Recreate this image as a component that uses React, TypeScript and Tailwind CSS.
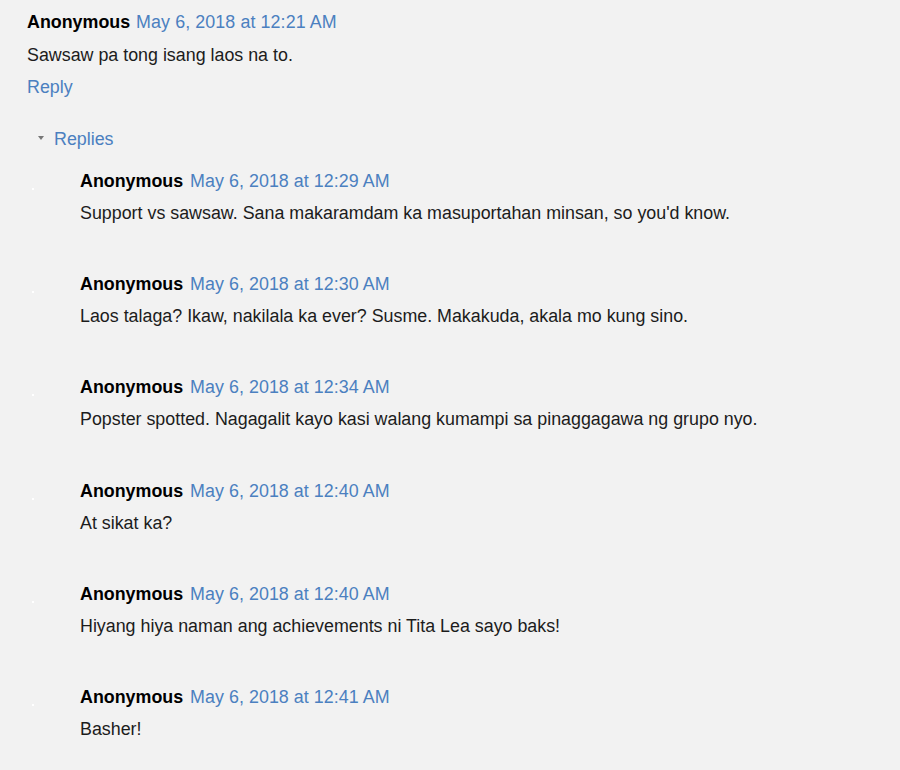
import React from "react";

const replies = [
  { time: "May 6, 2018 at 12:29 AM", text: "Support vs sawsaw. Sana makaramdam ka masuportahan minsan, so you'd know." },
  { time: "May 6, 2018 at 12:30 AM", text: "Laos talaga? Ikaw, nakilala ka ever? Susme. Makakuda, akala mo kung sino." },
  { time: "May 6, 2018 at 12:34 AM", text: "Popster spotted. Nagagalit kayo kasi walang kumampi sa pinaggagawa ng grupo nyo." },
  { time: "May 6, 2018 at 12:40 AM", text: "At sikat ka?" },
  { time: "May 6, 2018 at 12:40 AM", text: "Hiyang hiya naman ang achievements ni Tita Lea sayo baks!" },
  { time: "May 6, 2018 at 12:41 AM", text: "Basher!" },
];

export default function App() {
  return (
    <div
      className="min-h-[770px] bg-[#f2f2f2] pl-[27px] pt-[6px] text-[17.85px] text-[#1c1c1c]"
      style={{ fontFamily: '"Liberation Sans", Arial, sans-serif' }}
    >
      <div className="leading-[33px]">
        <span className="font-bold text-black">Anonymous</span>{" "}
        <span className="ml-[1px] tracking-[0.1px] text-[#4b80c0]">May 6, 2018 at 12:21 AM</span>
      </div>
      <div className="leading-[33px]">Sawsaw pa tong isang laos na to.</div>
      <div className="-mt-[1px] leading-[33px] text-[#4b80c0]">Reply</div>

      <div className="mt-[19px] flex items-center leading-[33px]">
        <span className="ml-[11px] mr-[10px] mb-[3px] h-0 w-0 border-x-[3.5px] border-t-[4px] border-x-transparent border-t-[#777]" />
        <span className="text-[#4b80c0]">Replies</span>
      </div>

      <div className="mt-[9px] flex flex-col gap-[39.2px]">
        {replies.map((r, i) => (
          <div key={i} className="flex">
            <div className="w-[53px] shrink-0">
              <div className="ml-[5px] mt-[23px] h-[2px] w-[2px] bg-white" />
            </div>
            <div>
              <div className="leading-[32px]">
                <span className="font-bold text-black">Anonymous</span>{" "}
                <span className="ml-[2px] tracking-[0.05px] text-[#4b80c0]">{r.time}</span>
              </div>
              <div className="leading-[32px]">{r.text}</div>
            </div>
          </div>
        ))}
      </div>
    </div>
  );
}
